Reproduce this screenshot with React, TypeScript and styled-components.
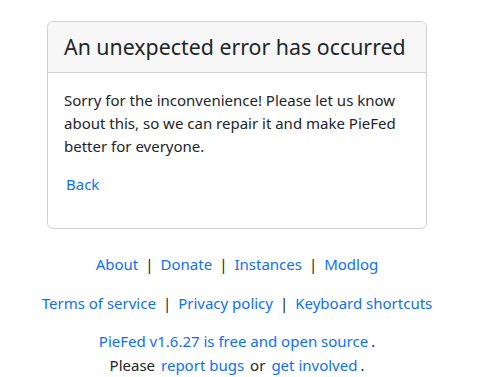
import React from "react";
import styled, { createGlobalStyle } from "styled-components";

const Global = createGlobalStyle`
  html, body { margin: 0; padding: 0; background: #fff; }
  body { font-family: "Noto Sans", sans-serif; color: #212529; font-size: 15px; line-height: 1.5; }
`;

const Page = styled.div`
  width: 474px;
  padding-top: 21px;
  display: flex;
  flex-direction: column;
  align-items: center;
`;

const Card = styled.div`
  width: 380px;
  box-sizing: border-box;
  border: 1px solid #d0d0d0;
  border-radius: 6px;
  overflow: hidden;
`;

const CardHeader = styled.div`
  background: #f7f7f7;
  border-bottom: 1px solid #d0d0d0;
  padding: 8px 16px 9px;
  font-size: 21.33px;
  line-height: 33px;
  font-weight: 400;
  white-space: nowrap;
`;

const CardBody = styled.div`
  padding: 16px 16px 32px;
`;

const Para = styled.p`
  margin: 0 0 15px;
  line-height: 23px;
`;

const Link = styled.a`
  color: #0d6efd;
  text-decoration: none;
`;

const BackLink = styled(Link)`
  display: inline-block;
  margin-left: 2px;
`;

const Footer = styled.footer`
  margin-top: 23px;
  display: flex;
  flex-direction: column;
  align-items: center;
  text-align: center;
`;

const NavRow = styled.div<{ $mb: number }>`
  margin-bottom: ${(p) => p.$mb}px;
  line-height: 24px;
`;

const Sep = styled.span`
  margin: 0 7px;
`;

const Gap = styled.span`
  display: inline-block;
  width: 6px;
`;

const Dot = styled.span`
  margin-left: 3px;
`;

export default function App() {
  return (
    <>
      <Global />
      <Page>
        <Card>
          <CardHeader>An unexpected error has occurred</CardHeader>
          <CardBody>
            <Para>
              Sorry for the inconvenience! Please let us know about this, so we can repair it and make PieFed
              better for everyone.
            </Para>
            <BackLink href="#">Back</BackLink>
          </CardBody>
        </Card>
        <Footer>
          <NavRow $mb={15}>
            <Link href="#">About</Link>
            <Sep>|</Sep>
            <Link href="#">Donate</Link>
            <Sep>|</Sep>
            <Link href="#">Instances</Link>
            <Sep>|</Sep>
            <Link href="#">Modlog</Link>
          </NavRow>
          <NavRow $mb={14}>
            <Link href="#">Terms of service</Link>
            <Sep>|</Sep>
            <Link href="#">Privacy policy</Link>
            <Sep>|</Sep>
            <Link href="#">Keyboard shortcuts</Link>
          </NavRow>
          <NavRow $mb={0}>
            <Link href="#">PieFed v1.6.27 is free and open source</Link>
            <Dot>.</Dot>
          </NavRow>
          <NavRow $mb={0}>
            Please<Gap />
            <Link href="#">report bugs</Link>
            <Gap />or<Gap />
            <Link href="#">get involved</Link>
            <Dot>.</Dot>
          </NavRow>
        </Footer>
      </Page>
    </>
  );
}
